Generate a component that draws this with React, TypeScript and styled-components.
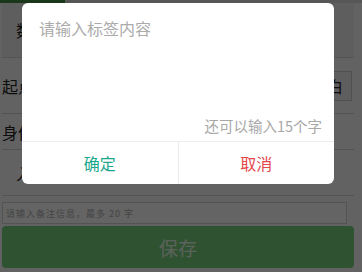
import React from "react";
import styled, { createGlobalStyle } from "styled-components";

const GlobalStyle = createGlobalStyle`
  html, body {
    margin: 0;
    padding: 0;
    background: #666;
  }
  body {
    font-family: "Noto Sans CJK SC", "Noto Sans", Roboto, sans-serif;
  }
`;

const Page = styled.div`
  position: relative;
  width: 362px;
  height: 272px;
  overflow: hidden;
  background: #f4f4f4;
  display: flex;
  flex-direction: column;
`;

const TopBar = styled.div`
  height: 3px;
  background: #d8d8d8;
  flex-shrink: 0;
`;

const Indicator = styled.div`
  width: 65px;
  height: 3px;
  background: #3c8d40;
`;

const Content = styled.div`
  flex: 1;
  display: flex;
  flex-direction: column;
  padding: 0 8px 5px 2px;
`;

const Row = styled.div<{ $h: number; $indent?: number; $bg?: string }>`
  height: ${(p) => p.$h}px;
  display: flex;
  align-items: center;
  justify-content: space-between;
  padding-left: ${(p) => p.$indent ?? 0}px;
  border-bottom: 1px solid #cfcfcf;
  background: ${(p) => p.$bg ?? "transparent"};
  font-size: 16px;
  color: #222;
`;

const SideButton = styled.div`
  width: 30px;
  height: 30px;
  margin-right: 2px;
  padding-right: 8px;
  box-sizing: border-box;
  border: 1px solid #c8c8c8;
  background: #eaeaea;
  display: flex;
  align-items: center;
  justify-content: flex-end;
  overflow: hidden;
  font-size: 16px;
  color: #222;
`;

const Input = styled.div`
  margin: 6px 7px 2px 0;
  height: 20px;
  border: 1px solid #cfcfcf;
  background: #fafafa;
  font-size: 9px;
  letter-spacing: 1px;
  color: #aaa;
  display: flex;
  align-items: center;
  padding-left: 3px;
`;

const SaveButton = styled.div`
  height: 42px;
  border-radius: 4px;
  background: #75cf7b;
  color: #e4f4e4;
  font-size: 19px;
  display: flex;
  align-items: center;
  justify-content: center;
`;

const Overlay = styled.div`
  position: absolute;
  inset: 0;
  background: rgba(0, 0, 0, 0.6);
`;

const Dialog = styled.div`
  position: absolute;
  left: 22px;
  top: 3px;
  width: 312px;
  height: 181px;
  background: #fff;
  border-radius: 6px;
  display: flex;
  flex-direction: column;
  overflow: hidden;
`;

const TextArea = styled.textarea`
  flex: 1;
  border: none;
  outline: none;
  resize: none;
  padding: 14px 16px 0 17px;
  font-family: inherit;
  font-size: 16px;
  line-height: 22px;
  color: #333;
  background: transparent;
  &::placeholder {
    color: #ababab;
  }
`;

const Counter = styled.div`
  text-align: right;
  padding: 0 12px 5px 0;
  font-size: 14.5px;
  line-height: 20px;
  color: #a8a8a8;
`;

const Footer = styled.div`
  height: 42px;
  border-top: 1px solid #ececec;
  display: flex;
`;

const DialogButton = styled.div<{ $color: string; $divider?: boolean }>`
  flex: 1;
  display: flex;
  align-items: center;
  justify-content: center;
  font-size: 16px;
  color: ${(p) => p.$color};
  border-left: ${(p) => (p.$divider ? "1px solid #ececec" : "none")};
`;

export default function App() {
  return (
    <>
      <GlobalStyle />
      <Page>
        <TopBar>
          <Indicator />
        </TopBar>
        <Content>
          <Row $h={54} $indent={14} $bg="#ebebeb">
            数据类型
          </Row>
          <Row $h={55}>
            起点位置
            <SideButton>白</SideButton>
          </Row>
          <Row $h={35}>身份证号</Row>
          <Row $h={45} $indent={14}>
            入库类型
          </Row>
          <Input>请输入备注信息，最多 20 字</Input>
          <SaveButton>保存</SaveButton>
        </Content>
        <Overlay />
        <Dialog>
          <TextArea placeholder="请输入标签内容" />
          <Counter>还可以输入15个字</Counter>
          <Footer>
            <DialogButton $color="#1ba78b">确定</DialogButton>
            <DialogButton $color="#e3464b" $divider>
              取消
            </DialogButton>
          </Footer>
        </Dialog>
      </Page>
    </>
  );
}
